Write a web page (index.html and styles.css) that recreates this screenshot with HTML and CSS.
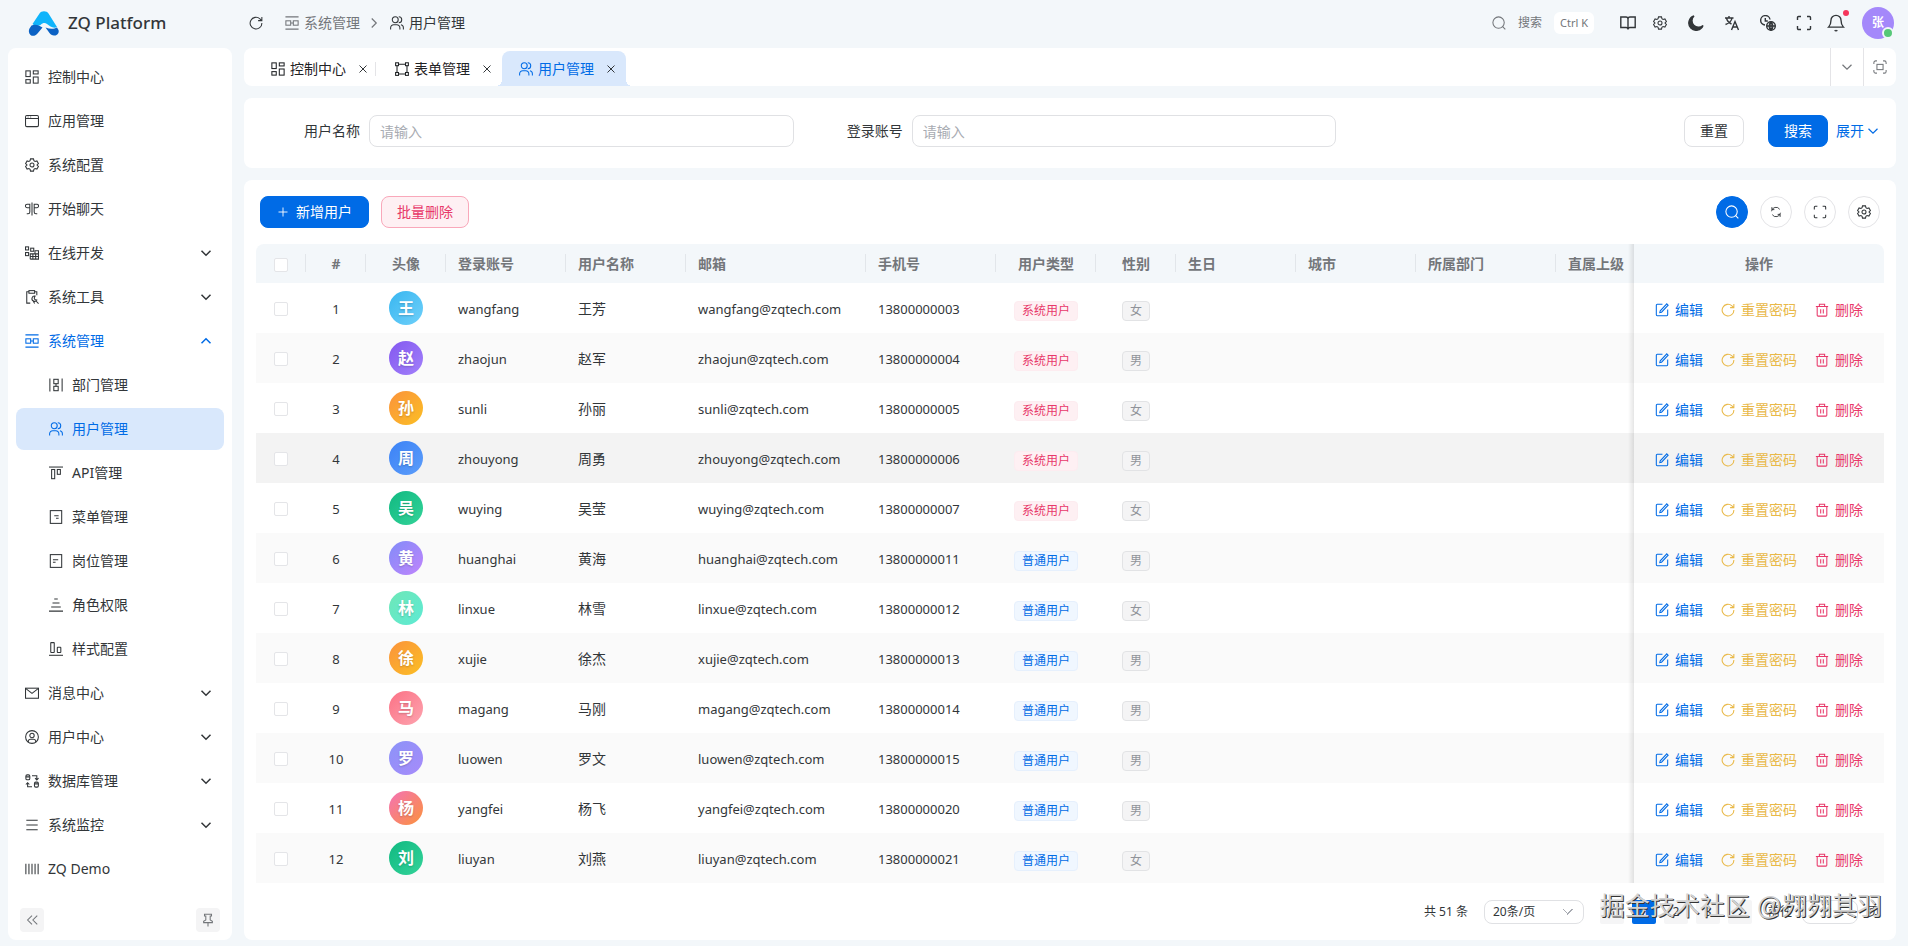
FILE: index.html
```html
<!DOCTYPE html>
<html lang="zh-CN">
<head>
  <meta charset="UTF-8" />
  <meta name="viewport" content="width=device-width, initial-scale=1.0" />
  <title>用户管理 - ZQ Platform</title>
  <link rel="stylesheet" href="styles.css">
</head>
<body>
  <!-- Icon sprite -->
  <svg class="sprite" aria-hidden="true">
    <symbol id="i-dashboard" viewBox="0 0 16 16"><rect x="1" y="1" width="5" height="6.5"/><rect x="9.5" y="1" width="5.5" height="3.5"/><rect x="1" y="11" width="5" height="4"/><rect x="9.5" y="8" width="5.5" height="7"/></symbol>
    <symbol id="i-app" viewBox="0 0 16 16"><rect x="0.6" y="1.8" width="14.8" height="12.6" rx="1.5"/><path d="M1 5.2h14M3 3.5h1M6 3.5h1"/></symbol>
    <symbol id="i-gear" viewBox="0 0 16 16"><path d="M6.3 1h3.4l.5 2.100 1.300.8 2.100-.6L15.300 6.300 13.700 8l1.600 1.700-1.700 3-2.100-.6-1.300.8L9.700 15H6.300l-.5-2.100-1.300-.8-2.100.6-1.700-3L2.300 8 .7 6.300l1.700-3 2.100.6 1.300-.8z"/><circle cx="8" cy="8" r="2.300"/></symbol>
    <symbol id="i-chat" viewBox="0 0 16 16"><path d="M8 0.500v15M5.500 2.500H2.500a2 2 0 0 0 0 4h3zM5.500 6.500v5a2 2 0 0 1-2 2H2M10.500 2.500h3a2 2 0 0 1 0 4h-3zM10.500 6.500v5a2 2 0 0 0 2 2H14"/></symbol>
    <symbol id="i-dev" viewBox="0 0 16 16"><rect x="0.600" y="1" width="3.500" height="3.500"/><rect x="0.600" y="7.500" width="3.500" height="3.500"/><rect x="6.500" y="2.500" width="3.500" height="3.500"/><path d="M6 15h9.400V5.500h-4v3.500M6 15V9h9.400M6 12h9.400M9 9v6M12.200 9v6"/></symbol>
    <symbol id="i-tools" viewBox="0 0 16 16"><path d="M4.500 2H2v13h4M11 2h2.500v4"/><rect x="4.500" y="0.700" width="6.500" height="3"/><path d="M11.500 7a3 3 0 1 0 2 4.500l-2.200-.5-.8-1.800zM12 12l3.500 3.500M9 12l2 3.500"/></symbol>
    <symbol id="i-system" viewBox="0 0 16 16"><path d="M0.500 1h15M0.500 15h15M6.500 8h3"/><rect x="1" y="5.500" width="5.500" height="5"/><rect x="9.500" y="5.500" width="5.500" height="5"/></symbol>
    <symbol id="i-dept" viewBox="0 0 16 16"><path d="M1 0.500v15M15 0.500v15M8 6.500v3"/><rect x="5.500" y="1.500" width="5" height="5"/><rect x="5.500" y="9.500" width="5" height="5"/></symbol>
    <symbol id="i-users" viewBox="0 0 16 16"><circle cx="6" cy="4.300" r="3.400"/><path d="M0.700 15.500v-2a3.500 3.500 0 0 1 3.500-3.500h3.600a3.500 3.500 0 0 1 3.500 3.500v2M10 0.900a3.400 3.400 0 0 1 0 6.800M12.500 10a3.500 3.500 0 0 1 2.800 3.500v2"/></symbol>
    <symbol id="i-api" viewBox="0 0 16 16"><path d="M0 1.200h16"/><rect x="3" y="4" width="3.500" height="10.500"/><rect x="9.500" y="4" width="3.500" height="5.500"/></symbol>
    <symbol id="i-menu" viewBox="0 0 16 16"><rect x="1.500" y="0.700" width="13" height="14.600"/><path d="M6 6.500h5M8 9.500h3"/></symbol>
    <symbol id="i-post" viewBox="0 0 16 16"><rect x="1.500" y="0.700" width="13" height="14.600"/><path d="M4.500 6.500h6M4.500 9.500h3"/></symbol>
    <symbol id="i-role" viewBox="0 0 16 16"><path d="M6 1.200h4M4 5.800h8M2.500 10.300h11M0 15h16"/></symbol>
    <symbol id="i-style" viewBox="0 0 16 16"><path d="M0 15.200h16"/><rect x="2" y="0.700" width="4" height="11.300" rx="0.500"/><rect x="9.500" y="6" width="4" height="6" rx="0.500"/></symbol>
    <symbol id="i-mail" viewBox="0 0 16 16"><rect x="0.600" y="2.500" width="14.800" height="11.500"/><path d="M1 3l7 5.500L15 3"/></symbol>
    <symbol id="i-user" viewBox="0 0 16 16"><circle cx="8" cy="8" r="7.300"/><circle cx="8" cy="6.300" r="2.500"/><path d="M3.800 14v-1.200A2.300 2.300 0 0 1 6 10.500h4a2.300 2.300 0 0 1 2.200 2.300V14"/></symbol>
    <symbol id="i-db" viewBox="0 0 16 16"><rect x="1" y="1" width="4.500" height="5.500" rx="1.500"/><path d="M1 3.300h4.500M10.800 11.300h4.500M8 2h5.500v4.500M11.500 4.800l2 2 2-2M8 14.500H3V10M1 12l2-2 2 2"/><rect x="10.800" y="9.300" width="4.500" height="5.700" rx="1.500"/></symbol>
    <symbol id="i-list" viewBox="0 0 16 16"><path d="M1.500 2.500h13M1.500 8h13M1.500 13.500h13"/></symbol>
    <symbol id="i-bars" viewBox="0 0 16 16"><path d="M1 2v12M4.500 2v12M8 2v12M11.500 2v12M15 2v12"/></symbol>
    <symbol id="i-form" viewBox="0 0 16 16"><rect x="0.700" y="0.900" width="3.300" height="3.300"/><rect x="12" y="0.900" width="3.300" height="3.300"/><rect x="0.700" y="12" width="3.300" height="3.300"/><rect x="12" y="12" width="3.300" height="3.300"/><path d="M4 2.500h8M4 13.700h8M2.300 4.200V12M13.700 4.200V12"/></symbol>
    <symbol id="i-down" viewBox="0 0 16 16"><path d="M2 5l6 6 6-6"/></symbol>
    <symbol id="i-up" viewBox="0 0 16 16"><path d="M2 11l6-6 6 6"/></symbol>
    <symbol id="i-right" viewBox="0 0 16 16"><path d="M5 2l6 6-6 6"/></symbol>
    <symbol id="i-left" viewBox="0 0 16 16"><path d="M11 2L5 8l6 6"/></symbol>
    <symbol id="i-collapse" viewBox="0 0 16 16"><path d="M8 3L3 8l5 5M14 3L9 8l5 5"/></symbol>
    <symbol id="i-pin" viewBox="0 0 16 16"><path d="M4 1.500h8v2h-1.500V8l2.500 1.500V11H3V9.500L5.500 8V3.500H4zM8 11v4.500"/></symbol>
    <symbol id="i-close" viewBox="0 0 16 16"><path d="M1 1l14 14M15 1L1 15"/></symbol>
    <symbol id="i-refresh" viewBox="0 0 16 16"><path d="M14.700 8A6.700 6.700 0 1 1 12.500 3.200l2.200 2M14.700 1v4.300h-4.300"/></symbol>
    <symbol id="i-search" viewBox="0 0 16 16"><circle cx="7.500" cy="7.500" r="6.500"/><path d="M12.200 12.200l3 3"/></symbol>
    <symbol id="i-book" viewBox="0 0 16 16"><path d="M8 4a2 2 0 0 0-2-2H0.800v10.500H6a2 2 0 0 1 2 2 2 2 0 0 1 2-2h5.200V2H10a2 2 0 0 0-2 2zv10"/></symbol>
    <symbol id="i-moon" viewBox="0 0 16 16"><path class="fill" d="M6 1a6.500 6.500 0 0 0 9 9.500A7.300 7.300 0 1 1 6 1z"/></symbol>
    <symbol id="i-lang" viewBox="0 0 16 16"><path d="M1 3h8.500M5 1v2M8 3C7.500 6 4.500 8.500 1.500 9.500M2.500 3c.5 2.500 3 5 5 6M7.500 15l3.500-8.500L14.500 15M8.800 12h4.500"/></symbol>
    <symbol id="i-zone" viewBox="0 0 16 16"><path d="M10 4.500A4.700 4.700 0 1 0 5 10M5.300 3v3h2.500"/><circle cx="11" cy="11" r="4.300"/><path d="M6.700 11h8.600M11 6.700v8.600M11 6.700c-2.500 2.500-2.500 6 0 8.600M11 6.700c2.500 2.500 2.500 6 0 8.600"/></symbol>
    <symbol id="i-full" viewBox="0 0 16 16"><path d="M1.500 5V2.500a1 1 0 0 1 1-1H5M11 1.500h2.500a1 1 0 0 1 1 1V5M14.500 11v2.500a1 1 0 0 1-1 1H11M5 14.500H2.500a1 1 0 0 1-1-1V11"/></symbol>
    <symbol id="i-focus" viewBox="0 0 16 16"><path d="M1 4.500V3a2 2 0 0 1 2-2h1.500M11.500 1H13a2 2 0 0 1 2 2v1.500M15 11.500V13a2 2 0 0 1-2 2h-1.500M4.500 15H3a2 2 0 0 1-2-2v-1.500"/><rect x="4.500" y="5" width="7" height="6"/></symbol>
    <symbol id="i-bell" viewBox="0 0 16 16"><path d="M8 1.200a4.500 4.500 0 0 0-4.500 4.500c0 4-1.300 5-2.200 6h13.400c-.9-1-2.200-2-2.200-6A4.500 4.500 0 0 0 8 1.200zM6.800 14.500c.6.700 1.800.7 2.400 0"/></symbol>
    <symbol id="i-plus" viewBox="0 0 16 16"><path d="M8 2v12M2 8h12"/></symbol>
    <symbol id="i-sync" viewBox="0 0 16 16"><path d="M2 7a6 6 0 0 1 11-2.500M2.500 1.500v3.300h3.300M14 9a6 6 0 0 1-11 2.500M13.500 14.500v-3.300h-3.300"/></symbol>
    <symbol id="i-edit" viewBox="0 0 16 16"><path d="M8.500 1.500h-6a1 1 0 0 0-1 1v11a1 1 0 0 0 1 1h11a1 1 0 0 0 1-1v-6M13.500 1l1.500 1.500-7.500 8-2 .5.500-2z"/></symbol>
    <symbol id="i-trash" viewBox="0 0 16 16"><path d="M1 4h14M5 4V1.500h6V4M2.500 4v10a1 1 0 0 0 1 1h9a1 1 0 0 0 1-1V4M6.500 7v5M9.500 7v5"/></symbol>
  </svg>

  <header class="topbar">
    <div class="brand">
      <svg class="brand-logo" viewBox="0 0 32 28" aria-hidden="true">
        <path fill="#0fb4fb" d="M11.500 4.500C13.200 1.500 18.800 1.500 20.500 4.500L29 18c-4 2-7-1-10-3-2-1.500-4-1.500-6.500 1L8 17.500 4.500 15z"/>
        <path fill="#0b62c4" d="M3.500 16.500C7 14.800 11 16 14.500 18.500L9.500 24.500C7.500 27 4.500 27.500 2.500 26S.500 21 1.500 19.500z"/>
        <path fill="#0b62c4" d="M17.500 18.500c4 1.500 8 2 11.500 0l1.500 2.500c1 3-1.500 6-4.500 5.500-2 0-3.500-1-4.500-2.500z"/>
      </svg>
      <span>ZQ Platform</span>
    </div>
    <button class="icon-btn" aria-label="刷新"><svg class="icon"><use href="#i-refresh"/></svg></button>
    <nav class="breadcrumb">
      <a href="#"><svg class="icon"><use href="#i-system"/></svg>系统管理</a>
      <svg class="icon icon-sm"><use href="#i-right"/></svg>
      <a href="#" class="current"><svg class="icon"><use href="#i-users"/></svg>用户管理</a>
    </nav>
    <div class="topbar-right">
      <button class="search-btn"><svg class="icon"><use href="#i-search"/></svg><span>搜索</span><kbd>Ctrl K</kbd></button>
      <button class="icon-btn" aria-label="文档"><svg class="icon icon-lg"><use href="#i-book"/></svg></button>
      <button class="icon-btn tight" aria-label="偏好设置"><svg class="icon"><use href="#i-gear"/></svg></button>
      <button class="icon-btn" aria-label="主题"><svg class="icon icon-lg"><use href="#i-moon"/></svg></button>
      <button class="icon-btn" aria-label="语言"><svg class="icon icon-lg"><use href="#i-lang"/></svg></button>
      <button class="icon-btn" aria-label="时区"><svg class="icon icon-lg"><use href="#i-zone"/></svg></button>
      <button class="icon-btn" aria-label="全屏"><svg class="icon icon-lg"><use href="#i-full"/></svg></button>
      <button class="icon-btn tight bell" aria-label="通知"><svg class="icon icon-xl"><use href="#i-bell"/></svg></button>
      <button class="me" aria-label="张">张</button>
    </div>
  </header>

  <div class="layout">
    <aside class="sidebar">
      <nav class="menu" id="menu"></nav>
      <div class="sidebar-footer">
        <button aria-label="收起"><svg class="icon"><use href="#i-collapse"/></svg></button>
        <button aria-label="固定"><svg class="icon"><use href="#i-pin"/></svg></button>
      </div>
    </aside>

    <main class="main">
      <div class="tabs">
        <div class="tab"><svg class="icon"><use href="#i-dashboard"/></svg><span>控制中心</span><button aria-label="关闭"><svg class="icon"><use href="#i-close"/></svg></button></div>
        <div class="tab"><svg class="icon"><use href="#i-form"/></svg><span>表单管理</span><button aria-label="关闭"><svg class="icon"><use href="#i-close"/></svg></button></div>
        <div class="tab active"><svg class="icon"><use href="#i-users"/></svg><span>用户管理</span><button aria-label="关闭"><svg class="icon"><use href="#i-close"/></svg></button></div>
        <div class="tab-tools">
          <button aria-label="更多"><svg class="icon icon-sm"><use href="#i-down"/></svg></button>
          <button aria-label="最大化"><svg class="icon"><use href="#i-focus"/></svg></button>
        </div>
      </div>

      <form class="card search-form">
        <div class="field">
          <label for="userName">用户名称</label>
          <input type="text" id="userName" placeholder="请输入" />
        </div>
        <div class="field">
          <label for="account">登录账号</label>
          <input type="text" id="account" placeholder="请输入" />
        </div>
        <div class="form-actions">
          <button type="reset" class="btn">重置</button>
          <button type="button" class="btn primary">搜索</button>
          <a href="#" class="expand">展开<svg class="icon icon-sm"><use href="#i-down"/></svg></a>
        </div>
      </form>

      <section class="card table-card">
        <div class="toolbar">
          <button class="btn primary add"><svg class="icon icon-sm"><use href="#i-plus"/></svg>新增用户</button>
          <button class="btn danger">批量删除</button>
          <div class="toolbar-right">
            <button class="round primary" aria-label="搜索"><svg class="icon"><use href="#i-search"/></svg></button>
            <button class="round" aria-label="刷新"><svg class="icon icon-sm"><use href="#i-sync"/></svg></button>
            <button class="round" aria-label="全屏"><svg class="icon"><use href="#i-full"/></svg></button>
            <button class="round" aria-label="列设置"><svg class="icon"><use href="#i-gear"/></svg></button>
          </div>
        </div>

        <table class="user-table">
          <colgroup>
            <col class="w-50"><col class="w-60"><col class="w-80"><col class="w-120"><col class="w-120"><col class="w-180"><col class="w-130"><col class="w-100"><col class="w-80"><col class="w-120"><col class="w-120"><col class="w-140"><col><col class="w-250">
          </colgroup>
          <thead>
            <tr>
              <th class="center"><input type="checkbox" aria-label="全选" /></th>
              <th class="center">#</th>
              <th class="center">头像</th>
              <th>登录账号</th>
              <th>用户名称</th>
              <th>邮箱</th>
              <th>手机号</th>
              <th class="center">用户类型</th>
              <th class="center">性别</th>
              <th>生日</th>
              <th>城市</th>
              <th>所属部门</th>
              <th>直属上级</th>
              <th class="center fixed">操作</th>
            </tr>
          </thead>
          <tbody id="userBody"></tbody>
        </table>

        <div class="pagination">
          <span>共 51 条</span>
          <select aria-label="每页条数"><option>20条/页</option></select>
          <div class="pages">
            <button aria-label="上一页"><svg class="icon icon-sm"><use href="#i-left"/></svg></button>
            <button class="active">1</button>
            <button>2</button>
            <button>3</button>
            <button aria-label="下一页"><svg class="icon icon-sm"><use href="#i-right"/></svg></button>
          </div>
          <label class="jump">前往<input type="text" value="1" />页</label>
        </div>
        <div class="watermark">掘金技术社区 @翙翙其羽</div>
      </section>
    </main>
  </div>

  <script>
    const menu = [
      { icon: 'dashboard', text: '控制中心' },
      { icon: 'app', text: '应用管理' },
      { icon: 'gear', text: '系统配置' },
      { icon: 'chat', text: '开始聊天' },
      { icon: 'dev', text: '在线开发', arrow: 'down' },
      { icon: 'tools', text: '系统工具', arrow: 'down' },
      { icon: 'system', text: '系统管理', arrow: 'up', cls: 'open' },
      { icon: 'dept', text: '部门管理', cls: 'sub' },
      { icon: 'users', text: '用户管理', cls: 'sub active' },
      { icon: 'api', text: 'API管理', cls: 'sub' },
      { icon: 'menu', text: '菜单管理', cls: 'sub' },
      { icon: 'post', text: '岗位管理', cls: 'sub' },
      { icon: 'role', text: '角色权限', cls: 'sub' },
      { icon: 'style', text: '样式配置', cls: 'sub' },
      { icon: 'mail', text: '消息中心', arrow: 'down' },
      { icon: 'user', text: '用户中心', arrow: 'down' },
      { icon: 'db', text: '数据库管理', arrow: 'down' },
      { icon: 'list', text: '系统监控', arrow: 'down' },
      { icon: 'bars', text: 'ZQ Demo' }
    ];

    // account, name, phone, system user, gender, avatar colour
    const users = [
      ['wangfang', '王芳', '13800000003', true, '女', 'sky'],
      ['zhaojun', '赵军', '13800000004', true, '男', 'violet'],
      ['sunli', '孙丽', '13800000005', true, '女', 'orange'],
      ['zhouyong', '周勇', '13800000006', true, '男', 'blue'],
      ['wuying', '吴莹', '13800000007', true, '女', 'green'],
      ['huanghai', '黄海', '13800000011', false, '男', 'purple'],
      ['linxue', '林雪', '13800000012', false, '女', 'mint'],
      ['xujie', '徐杰', '13800000013', false, '男', 'orange'],
      ['magang', '马刚', '13800000014', false, '男', 'pink'],
      ['luowen', '罗文', '13800000015', false, '男', 'indigo'],
      ['yangfei', '杨飞', '13800000020', false, '男', 'coral'],
      ['liuyan', '刘燕', '13800000021', false, '女', 'green']
    ];

    function icon(name, cls = '') {
      return `<svg class="icon ${cls}"><use href="#i-${name}"/></svg>`;
    }

    document.getElementById('menu').innerHTML = menu.map(m => `
      <a href="#" class="menu-item ${m.cls || ''}">
        ${icon(m.icon)}<span>${m.text}</span>${m.arrow ? icon(m.arrow, 'arrow') : ''}
      </a>`).join('');

    document.getElementById('userBody').innerHTML = users.map((u, i) => `
      <tr class="${i === 3 ? 'hover' : ''}">
        <td class="center"><input type="checkbox" aria-label="选择${u[1]}" /></td>
        <td class="center text latin">${i + 1}</td>
        <td class="center"><span class="avatar ${u[5]}">${u[1][0]}</span></td>
        <td class="text latin">${u[0]}</td>
        <td class="text">${u[1]}</td>
        <td class="text latin">${u[0]}@zqtech.com</td>
        <td class="text latin">${u[2]}</td>
        <td class="center low"><span class="tag ${u[3] ? 'red' : 'blue'}">${u[3] ? '系统用户' : '普通用户'}</span></td>
        <td class="center low"><span class="tag grey">${u[4]}</span></td>
        <td></td>
        <td></td>
        <td></td>
        <td></td>
        <td class="center fixed low">
          <div class="ops">
            <button class="op edit">${icon('edit')}编辑</button>
            <button class="op reset">${icon('refresh')}重置密码</button>
            <button class="op del">${icon('trash')}删除</button>
          </div>
        </td>
      </tr>`).join('');
  </script>
</body>
</html>
```
FILE: styles.css
```css
*, *::before, *::after {
  box-sizing: border-box;
}
body {
  margin: 0;
  min-height: 100vh;
  display: flex;
  flex-direction: column;
  background: #f3f7fa;
  color: #323639;
  font-family: "Noto Sans", "Noto Sans CJK SC", sans-serif;
  font-size: 14px;
  line-height: 20px;
}
a {
  color: inherit;
  text-decoration: none;
}
button, input, select {
  font: inherit;
  color: inherit;
}
button {
  padding: 0;
  border: 0;
  background: none;
  cursor: pointer;
}
.sprite {
  position: absolute;
  width: 0;
  height: 0;
}
.icon {
  width: 14px;
  height: 14px;
  flex: none;
  fill: none;
  stroke: currentColor;
  stroke-width: 1.2;
}
.icon-sm {
  width: 12px;
  height: 12px;
  stroke-width: 1.6;
}
.icon-lg {
  width: 16px;
  height: 16px;
  stroke-width: 1.4;
}
.icon-xl {
  width: 18px;
  height: 18px;
}
.fill {
  fill: currentColor;
}

/* Top bar */
.topbar {
  height: 48px;
  padding: 0 14px 2px 28px;
  display: flex;
  align-items: center;
}
.brand {
  width: 216px;
  display: flex;
  align-items: center;
  gap: 8px;
  font-size: 17px;
  font-weight: 500;
}
.brand-logo {
  width: 32px;
  height: 28px;
}
.icon-btn {
  width: 20px;
  height: 32px;
  display: flex;
  align-items: center;
  justify-content: center;
}
.topbar > .icon-btn {
  width: 24px;
}
.breadcrumb {
  margin-left: 17px;
  display: flex;
  align-items: center;
  gap: 8px;
  color: #73767a;
}
.breadcrumb a {
  display: flex;
  align-items: center;
  gap: 5px;
}
.breadcrumb .icon-sm {
  margin-right: 2px;
}
.breadcrumb .current {
  color: #323639;
}
.topbar-right {
  margin-left: auto;
  display: flex;
  align-items: center;
  gap: 16px;
}
.search-btn {
  height: 32px;
  margin-right: 8px;
  display: flex;
  align-items: center;
  gap: 12px;
  font-size: 12px;
  color: #73767a;
}
.search-btn kbd {
  padding: 0 6px;
  border-radius: 6px;
  background: #fff;
  font-family: inherit;
  font-size: 11px;
  line-height: 22px;
}
.tight {
  margin-left: -4px;
}
.bell {
  position: relative;
}
.bell::after {
  content: "";
  position: absolute;
  top: 3px;
  right: -3px;
  width: 6px;
  height: 6px;
  border-radius: 50%;
  background: #f5365c;
}
.me {
  position: relative;
  width: 32px;
  height: 32px;
  border-radius: 50%;
  background: #a488fa;
  color: #fff;
  font-size: 12px;
  font-weight: 700;
}
.me::after {
  content: "";
  position: absolute;
  right: 0;
  bottom: 0;
  width: 12px;
  height: 12px;
  border: 2px solid #f3f7fa;
  border-radius: 50%;
  background: #57c878;
}

/* Layout */
.layout {
  flex: 1;
  display: flex;
  gap: 12px;
  padding: 0 12px 6px 8px;
}
.sidebar {
  width: 224px;
  flex: none;
  padding: 8px;
  display: flex;
  flex-direction: column;
  background: #fff;
  border-radius: 8px;
}
.menu {
  display: flex;
  flex-direction: column;
  gap: 2px;
}
.menu-item {
  height: 42px;
  padding: 0 12px 0 9px;
  display: flex;
  align-items: center;
  gap: 9px;
  border-radius: 8px;
}
.menu-item.sub {
  padding-left: 33px;
}
.menu-item.open {
  color: #006be6;
}
.menu-item.active {
  background: #d9e8fc;
  color: #006be6;
}
.menu-item .arrow {
  width: 12px;
  height: 12px;
  margin-left: auto;
  stroke-width: 2;
}
.sidebar-footer {
  margin-top: auto;
  padding: 0 4px;
  display: flex;
  justify-content: space-between;
}
.sidebar-footer button {
  width: 24px;
  height: 24px;
  display: flex;
  align-items: center;
  justify-content: center;
  border-radius: 4px;
  background: #f4f4f5;
  color: #73767a;
}
.main {
  flex: 1;
  min-width: 0;
  display: flex;
  flex-direction: column;
  gap: 12px;
}
.card {
  background: #fff;
  border-radius: 8px;
}

/* Tabs */
.tabs {
  height: 38px;
  padding-left: 10px;
  display: flex;
  align-items: flex-end;
  background: #fff;
  border-radius: 8px;
}
.tab {
  position: relative;
  width: 124px;
  height: 35px;
  padding: 0 11px 0 17px;
  display: flex;
  align-items: center;
  gap: 5px;
  color: #1f2225;
}
.tab:first-child::after {
  content: "";
  position: absolute;
  right: 2px;
  top: 11px;
  height: 14px;
  border-right: 1px solid #e4e4e7;
}
.tab button {
  width: 8px;
  height: 20px;
  margin-left: auto;
  display: flex;
  align-items: center;
  color: #323639;
}
.tab button .icon {
  width: 8px;
  height: 8px;
  stroke-width: 2;
}
.tab.active {
  background: #d9e8fc;
  border-radius: 8px 8px 0 0;
  color: #006be6;
}
.tab.active::before,
.tab.active::after {
  content: "";
  position: absolute;
  bottom: 0;
  width: 6px;
  height: 6px;
}
.tab.active::before {
  left: -6px;
  background: radial-gradient(circle at 0 0, transparent 6px, #d9e8fc 6px);
}
.tab.active::after {
  right: -6px;
  background: radial-gradient(circle at 100% 0, transparent 6px, #d9e8fc 6px);
}
.tab-tools {
  margin-left: auto;
  display: flex;
}
.tab-tools button {
  width: 33px;
  height: 38px;
  display: flex;
  align-items: center;
  justify-content: center;
  border-left: 1px solid #e4e4e7;
  color: #73767a;
}

/* Search form */
.search-form {
  padding: 17px 17px 21px 23px;
  display: grid;
  grid-template-columns: repeat(3, 1fr);
  gap: 16px;
}
.field {
  display: flex;
  align-items: center;
  gap: 9px;
}
.field label {
  width: 93px;
  text-align: right;
}
.field input {
  flex: 1;
  min-width: 0;
  height: 32px;
  padding: 0 10px;
  border: 1px solid #e0e1e4;
  border-radius: 8px;
  background: #fff;
}
.field input::placeholder {
  color: #a8abb2;
}
.form-actions {
  display: flex;
  align-items: center;
  justify-content: flex-end;
}
.form-actions .primary {
  margin: 0 8px 0 24px;
}
.expand {
  display: flex;
  align-items: center;
  gap: 3px;
  color: #006be6;
}
.btn {
  height: 32px;
  padding: 0 15px;
  display: flex;
  align-items: center;
  border: 1px solid #e0e1e4;
  border-radius: 8px;
  background: #fff;
}
.btn.primary {
  border-color: #006be6;
  background: #006be6;
  color: #fff;
}
.btn.danger {
  border-color: #f9a8ba;
  background: #fef0f3;
  color: #e8386a;
}
.btn.add {
  gap: 7px;
  padding: 0 16px;
}
.btn.add .icon {
  stroke-width: 1.2;
}

/* Table */
.table-card {
  position: relative;
  flex: 1;
  padding: 16px 12px;
}
.toolbar {
  padding: 0 4px;
  margin-bottom: 16px;
  display: flex;
  gap: 12px;
}
.toolbar-right {
  margin-left: auto;
  display: flex;
  gap: 12px;
}
.round {
  width: 32px;
  height: 32px;
  display: flex;
  align-items: center;
  justify-content: center;
  border: 1px solid #e4e4e7;
  border-radius: 50%;
}
.round.primary {
  border-color: #006be6;
  background: #006be6;
  color: #fff;
}
.round .icon {
  stroke-width: 1.2;
}
.user-table {
  width: 100%;
  table-layout: fixed;
  border-collapse: separate;
  border-spacing: 0;
}
.w-50 { width: 50px; }
.w-60 { width: 60px; }
.w-80 { width: 80px; }
.w-100 { width: 100px; }
.w-120 { width: 120px; }
.w-130 { width: 130px; }
.w-140 { width: 140px; }
.w-180 { width: 180px; }
.w-250 { width: 250px; }
th, td {
  padding: 0 0 0 12px;
  text-align: left;
  white-space: nowrap;
}
th {
  position: relative;
  height: 39px;
  background: #f3f7fa;
  color: #73767a;
  font-weight: 700;
}
th:first-child {
  border-radius: 8px 0 0 0;
}
th:last-child {
  border-radius: 0 8px 0 0;
}
th:nth-child(-n+12)::after {
  content: "";
  position: absolute;
  right: 0;
  top: 10px;
  height: 18px;
  border-right: 1px solid #e2e6ea;
}
td {
  height: 50px;
}
th.center, td.center {
  padding: 0;
  text-align: center;
}
td.text {
  padding-top: 2px;
}
td.low {
  padding-top: 4px;
}
tbody tr:nth-child(even) td {
  background: #fafafa;
}
tbody tr.hover td {
  background: #f3f3f3;
}
.latin {
  font-size: 13px;
}
.fixed {
  position: relative;
}
.fixed::before {
  content: "";
  position: absolute;
  left: -6px;
  top: 0;
  bottom: 0;
  width: 6px;
  background: linear-gradient(to right, rgba(0, 0, 0, 0), rgba(0, 0, 0, 0.1));
}
input[type="checkbox"] {
  appearance: none;
  width: 14px;
  height: 14px;
  margin: 0;
  border: 1px solid #e4e5e8;
  border-radius: 2px;
  background: #fff;
  vertical-align: middle;
}
.avatar {
  width: 34px;
  height: 34px;
  display: inline-block;
  border-radius: 50%;
  color: #fff;
  font-size: 16px;
  font-weight: 700;
  line-height: 34px;
  vertical-align: middle;
  text-shadow: 0 1px 2px rgba(0, 0, 0, 0.2);
}
.sky { background: linear-gradient(135deg, #38b6f0, #6fd0fa); }
.violet { background: linear-gradient(135deg, #8358f0, #a280fa); }
.orange { background: linear-gradient(135deg, #fb923c, #fbbf24); }
.blue { background: linear-gradient(135deg, #3b82f6, #5c9dfa); }
.green { background: linear-gradient(135deg, #10b981, #34d399); }
.purple { background: linear-gradient(135deg, #818cf8, #c084fc); }
.mint { background: linear-gradient(135deg, #6ee7b7, #5eead4); }
.pink { background: linear-gradient(135deg, #fb7185, #fda4af); }
.indigo { background: linear-gradient(135deg, #8b93f8, #a78bfa); }
.coral { background: linear-gradient(135deg, #f472b6, #fb923c); }
.tag {
  height: 20px;
  padding: 0 7px;
  display: inline-block;
  border: 1px solid;
  border-radius: 4px;
  font-size: 12px;
  line-height: 18px;
  vertical-align: middle;
}
.tag.red {
  border-color: #fdecf0;
  background: #fef0f3;
  color: #e8386a;
}
.tag.blue {
  border-color: #e6f0fd;
  background: #f0f7ff;
  color: #006be6;
}
.tag.grey {
  border-color: #e2e3e5;
  background: #f4f4f5;
  color: #909399;
}
.ops {
  display: flex;
  justify-content: center;
  gap: 18px;
}
.op {
  display: flex;
  align-items: center;
  gap: 6px;
}
.op.edit { color: #006be6; }
.op.reset { color: #e9b949; }
.op.del { color: #e8386a; }

/* Pagination */
.pagination {
  padding: 17px 4px 0 0;
  display: flex;
  align-items: center;
  justify-content: flex-end;
  gap: 16px;
  font-size: 12px;
}
.pagination select {
  width: 100px;
  height: 24px;
  padding: 0 8px;
  border: 1px solid #e0e1e4;
  border-radius: 8px;
  appearance: none;
  background: linear-gradient(45deg, transparent 50%, #a8abb2 50%, #a8abb2 60%, transparent 60%) right 15px center / 6px 6px no-repeat, linear-gradient(-45deg, transparent 50%, #a8abb2 50%, #a8abb2 60%, transparent 60%) right 10px center / 6px 6px no-repeat, #fff;
}
.pages {
  display: flex;
  gap: 8px;
}
.pages button {
  width: 24px;
  height: 24px;
  display: flex;
  align-items: center;
  justify-content: center;
  border-radius: 2px;
  background: #f5f5f6;
}
.pages button.active {
  background: #006be6;
  color: #fff;
  font-weight: 700;
}
.jump {
  display: flex;
  align-items: center;
  gap: 10px;
}
.jump input {
  width: 56px;
  height: 24px;
  padding: 0;
  border: 1px solid #e0e1e4;
  border-radius: 8px;
  text-align: center;
}
.watermark {
  position: absolute;
  right: 14px;
  bottom: 16px;
  color: #d2d2d2;
  font-family: "Liberation Sans", "Noto Sans CJK SC", sans-serif;
  font-size: 25px;
  line-height: 36px;
  text-shadow: 1px 1px 0 #333;
  pointer-events: none;
}
```
